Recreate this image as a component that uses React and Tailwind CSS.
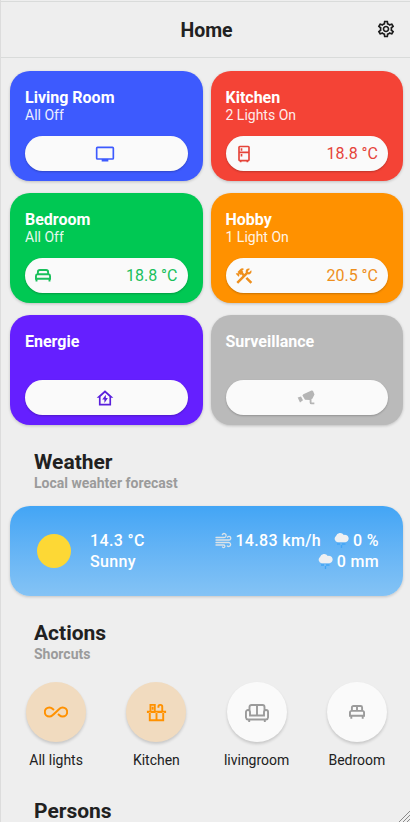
import React from "react";
import { MdOutlineSettings } from "react-icons/md";

function Svg({ size = 20, children, className = "" }) {
  return (
    <svg width={size} height={size} viewBox="0 0 24 24" fill="currentColor" className={`shrink-0 ${className}`}>
      {children}
    </svg>
  );
}

const Tv = () => (
  <Svg className="mr-0.5">
    <path d="M21,17H3V5H21M21,3H3A2,2 0 0,0 1,5V17A2,2 0 0,0 3,19H8V21H16V19H21A2,2 0 0,0 23,17V5A2,2 0 0,0 21,3Z" />
  </Svg>
);

const Fridge = () => (
  <Svg>
    <path d="M7 2A2 2 0 0 0 5 4V19A2 2 0 0 0 7 21V22H9V21H15V22H17V21A2 2 0 0 0 19 19V4A2 2 0 0 0 17 2H7M7 4H17V9H7V4M7 11H17V19H7V11M8 5V8H10V5H8M8 12V15H10V12H8Z" fillRule="evenodd" />
  </Svg>
);

const Bed = () => (
  <svg width="16" height="13" viewBox="0 0 16 13" fill="none" stroke="currentColor" strokeWidth="1.900" className="ml-0.5 shrink-0">
    <path d="M2.900 5.500V2.900A2 2 0 0 1 4.900 0.950H11.100A2 2 0 0 1 13.100 2.900V5.500M2.500 5.300H13.500A1.600 1.600 0 0 1 15.050 6.900V9.700H0.950V6.900A1.600 1.600 0 0 1 2.500 5.300ZM1.500 9.700V12.500M14.500 9.700V12.500" />
  </svg>
);

const Tools = () => (
  <Svg>
    <path d="M13.78 15.3L19.78 21.3L21.89 19.14L15.89 13.14L13.78 15.3M17.5 10.1C17.11 10.1 16.69 10.05 16.36 9.91L4.97 21.25L2.86 19.14L10.27 11.74L8.5 9.96L7.78 10.66L6.33 9.25V12.11L5.63 12.81L2.11 9.25L2.81 8.55H5.62L4.22 7.14L7.78 3.58C8.95 2.41 10.83 2.41 12 3.58L9.89 5.74L11.3 7.14L10.59 7.85L12.38 9.63L14.2 7.75C14.06 7.42 14 7 14 6.63C14 4.66 15.56 3.11 17.5 3.11C18.09 3.11 18.61 3.25 19.08 3.53L16.41 6.2L17.91 7.7L20.58 5.03C20.86 5.5 21 6 21 6.63C21 8.55 19.45 10.1 17.5 10.1Z" />
  </Svg>
);

const HomeBolt = () => (
  <Svg className="mr-0.5">
    <path d="M12 5.690L17.300 10.400V19H6.700V10.400L12 5.690M12 2.600L2 11.700H4.700V21H19.300V11.700H22L12 2.600Z" fillRule="evenodd" />
    <path d="M13 8L8.600 13.700H11.300V18L15.500 12.100H13Z" />
  </Svg>
);

const Cctv = () => (
  <Svg className="mr-0.5">
    <path d="M8.800 7.600L18.600 3.100Q20 2.700 20.600 4L22.200 7.700L19.600 12.900L18.600 13.300V17.500H22V19.500H18.600Q16.400 19.500 16.400 17.300V14.300L10.800 14.200L7.700 8.900ZM2 11.500L6 10.200L8.400 14.800L4.800 17.500Z" />
  </Svg>
);

const Loop = () => (
  <Svg size={24}>
    <path
      d="M11 13L8.500 15.300C7.700 16.100 6.600 16.600 5.400 16.600A4.600 4.600 0 0 1 5.400 7.400C6.600 7.400 7.700 7.900 8.500 8.700L10 10M9.500 14.400L15.500 8.700C16.300 7.900 17.400 7.400 18.600 7.400A4.600 4.600 0 0 1 18.600 16.600C17.400 16.600 16.300 16.100 15.500 15.300L14 14"
      fill="none"
      stroke="currentColor"
      strokeWidth="2"
    />
  </Svg>
);

const Countertop = () => (
  <Svg size={23}>
    <path d="M2 10.300H22V12.500H2ZM4.700 3H11.200V10.300H9.300V4.900H6.600V10.300H4.700ZM13 5.800A2.800 2.800 0 0 1 15.800 3H16.200A2.800 2.800 0 0 1 19 5.800V10.300H17V6A1 1 0 0 0 15 6V7H13ZM4 12V21H20V12H18V19H13V12H11V19H6V12ZM7 6H9V9H7Z" />
  </Svg>
);

const Sofa = () => (
  <svg width="24" height="18" viewBox="0 0 24 18" fill="none" stroke="currentColor" strokeWidth="1.900" className="mt-0.5 shrink-0">
    <path d="M4.500 6V2.950A2 2 0 0 1 6.500 0.950H17.500A2 2 0 0 1 19.500 2.950V6M12 0.950V11.500M5 11.500V8A2 2 0 0 0 0.950 8V13.500A2.200 2.200 0 0 0 3 15.500H21A2.200 2.200 0 0 0 23.050 13.500V8A2 2 0 0 0 19 8V11.500ZM4.200 15.500V18M19.800 15.500V18" />
  </svg>
);

const DoubleBed = () => (
  <svg width="16" height="14" viewBox="0 0 16 14" fill="none" stroke="currentColor" strokeWidth="1.900" className="shrink-0">
    <path d="M2.900 6V2.450A1.500 1.500 0 0 1 4.400 0.950H11.600A1.500 1.500 0 0 1 13.100 2.450V6M8 0.950V5.500M2.450 5.900H13.550A1.500 1.500 0 0 1 15.050 7.400V10.700H0.950V7.400A1.500 1.500 0 0 1 2.450 5.900ZM2.300 10.700V13.700M13.700 10.700V13.700" />
  </svg>
);

const Wind = () => (
  <svg width="17" height="17" viewBox="0 0 17 17" fill="none" stroke="#dce3e8" strokeWidth="1.300" strokeLinecap="round">
    <path d="M1 5.500H9.200A2 2 0 1 0 7.300 2.700M1 8H14A1.800 1.800 0 1 0 12.500 5.200M1 10.500H13.800A2 2 0 1 1 12.300 14M1 13H8.800A1.300 1.300 0 1 1 7.500 15" />
  </svg>
);

const Rain = () => (
  <svg width="15" height="17" viewBox="0 0 15 17">
    <path d="M3.800 10.200A3.500 3.500 0 0 1 2 4A4.300 4.300 0 0 1 9.800 3A3.700 3.700 0 1 1 11.300 10.200Z" fill="#eef0f2" />
    <path d="M3 12H6M8 12H11.500M7.500 13V16" stroke="#42a5f5" strokeWidth="1.300" />
  </svg>
);

const rooms = [
  { name: "Living Room", state: "All Off", color: "bg-[#3d5afe] text-[#3d5afe]", icon: <Tv /> },
  { name: "Kitchen", state: "2 Lights On", color: "bg-[#f44336] text-[#e5443a]", icon: <Fridge />, temp: "18.8 °C" },
  { name: "Bedroom", state: "All Off", color: "bg-[#00c853] text-[#19c05b]", icon: <Bed />, temp: "18.8 °C" },
  { name: "Hobby", state: "1 Light On", color: "bg-[#ff9100] text-[#ee8f1c]", icon: <Tools />, temp: "20.5 °C" },
  { name: "Energie", color: "bg-[#651fff] text-[#5a20dc]", icon: <HomeBolt /> },
  { name: "Surveillance", color: "bg-[#bababa] text-[#b5b5b5]", icon: <Cctv /> },
];

const actions = [
  { name: "All lights", icon: <Loop />, on: true },
  { name: "Kitchen", icon: <Countertop />, on: true },
  { name: "livingroom", icon: <Sofa /> },
  { name: "Bedroom", icon: <DoubleBed /> },
];

function RoomCard({ room }) {
  return (
    <div className={`flex h-[110px] flex-col justify-between rounded-[20px] px-[15px] pt-[18px] pb-2.5 shadow-[0_1px_3px_rgba(0,0,0,0.2)] ${room.color}`}>
      <div className="text-white">
        <div className="text-base leading-[18px] font-bold">{room.name}</div>
        <div className="text-sm leading-[17px] opacity-90">{room.state}</div>
      </div>
      <div className={`flex h-[35px] items-center rounded-full bg-[#fafafa] shadow-[0_1px_2px_rgba(0,0,0,0.22)] ${room.temp ? "justify-between pr-2.5 pl-2" : "justify-center"}`}>
        {room.icon}
        {room.temp && <span className="text-base">{room.temp}</span>}
      </div>
    </div>
  );
}

function SectionTitle({ title, sub }) {
  return (
    <div className="pl-6">
      <h2 className="text-[21px] leading-6 font-bold text-[#212121]">{title}</h2>
      <p className="text-sm leading-[18px] font-bold text-[#9b9b9b]">{sub}</p>
    </div>
  );
}

export default function App() {
  return (
    <div className="relative h-[822px] w-[410px] overflow-hidden border-l border-[#dcdcdc] bg-[#eeeeee] font-['Roboto',sans-serif]">
      <header className="mt-px flex h-[57px] items-center border-y border-[#d9dbda] pr-[14px]">
        <div className="w-8" />
        <h1 className="flex-1 pt-0.5 pl-1 text-center text-[19.5px] font-bold text-[#212121]">Home</h1>
        <MdOutlineSettings size={20} className="mb-0.5 text-[#1c1c1c]" />
      </header>
      <main className="pt-[13px] pr-[7px] pl-[9px]">
        <div className="grid grid-cols-2 gap-x-2 gap-y-3">
          {rooms.map((r) => (
            <RoomCard key={r.name} room={r} />
          ))}
        </div>
        <div className="pt-[25px]">
          <SectionTitle title="Weather" sub="Local weahter forecast" />
        </div>
        <div className="mt-3.5 flex h-[90px] items-center rounded-[20px] bg-linear-to-b from-[#42a5f5] to-[#84c3f5] pr-6 pl-[27px] font-medium text-white shadow-[0_1px_3px_rgba(0,0,0,0.18)]">
          <div className="size-[34px] rounded-full bg-[#fdd835]" />
          <div className="pl-[19px] text-base leading-[21px] tracking-[0.35px]">
            <div>14.3 °C</div>
            <div>Sunny</div>
          </div>
          <div className="ml-auto flex flex-col items-end text-base leading-[21px] tracking-[0.35px]">
            <div className="flex items-center">
              <Wind />
              <span className="pr-[13px] pl-[3px]">14.83 km/h</span>
              <Rain />
              <span className="pl-1">0 %</span>
            </div>
            <div className="flex items-center">
              <Rain />
              <span className="pl-1">0 mm</span>
            </div>
          </div>
        </div>
        <div className="pt-[25px]">
          <SectionTitle title="Actions" sub="Shorcuts" />
        </div>
        <div className="-ml-1 grid w-[401px] grid-cols-4 pt-[19px]">
          {actions.map((a) => (
            <div key={a.name} className="flex flex-col items-center">
              <div className={`flex size-[60px] items-center justify-center rounded-full shadow-[0_2px_3px_rgba(0,0,0,0.16)] ${a.on ? "bg-[#f1dbbf] text-[#ff9100]" : "bg-[#fafafa] text-[#9b9b9b]"}`}>
                {a.icon}
              </div>
              <div className="pt-[9px] text-sm leading-[18px] text-[#212121]">{a.name}</div>
            </div>
          ))}
        </div>
        <div className="pt-[30px] pl-6">
          <h2 className="text-[21px] leading-6 font-bold text-[#212121]">Persons</h2>
        </div>
      </main>
      <svg width="11" height="11" viewBox="0 0 11 11" className="absolute right-0 bottom-0" stroke="#8a8a8a" strokeWidth="1">
        <path d="M0 11L11 0M4 11L11 4M8 11L11 8" />
      </svg>
    </div>
  );
}
